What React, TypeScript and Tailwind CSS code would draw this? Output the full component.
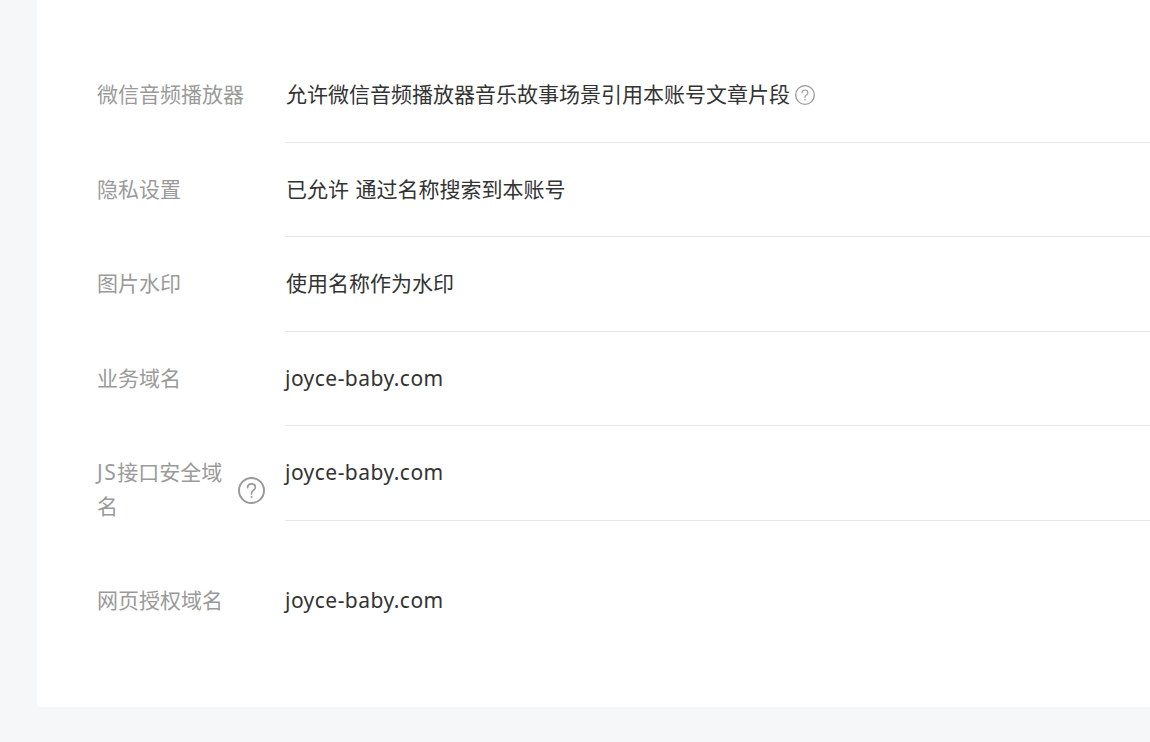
import React from "react";

function Help({ size, stroke }: { size: number; stroke: number }) {
  return (
    <svg width={size} height={size} viewBox="0 0 27 27" fill="none" className="shrink-0">
      <circle cx="13.5" cy="13.5" r={13.5 - stroke / 2} stroke="#9a9a9a" strokeWidth={stroke} />
      <path d="M9.6 10.6c0-2.3 1.7-3.8 3.9-3.8s3.9 1.4 3.9 3.5c0 1.5-.8 2.3-2 3.1-1.2.8-1.9 1.4-1.9 2.9v.7" stroke="#9a9a9a" strokeWidth={stroke * 0.85} strokeLinecap="round" />
      <circle cx="13.5" cy="20" r="1.1" fill="#9a9a9a" />
    </svg>
  );
}

function Row({ label, help, last, children }: { label: React.ReactNode; help?: boolean; last?: boolean; children: React.ReactNode }) {
  return (
    <div className="flex items-start">
      <div className="flex w-[188px] shrink-0 items-center py-[30px] text-[#9a9a9a]">
        <div className={help ? "w-[130px]" : ""}>{label}</div>
        {help && <span className="ml-[11px] mt-[2px]"><Help size={27} stroke={2} /></span>}
      </div>
      <div className={"min-w-0 flex-1 py-[30px] text-[#333333] " + (last ? "" : "border-b border-[#e7e7eb]")}>
        {children}
      </div>
    </div>
  );
}

const Domain = () => <span className="tracking-[0.46px]">joyce-baby.com</span>;

export default function App() {
  return (
    <div className="min-h-[742px] overflow-hidden bg-[#f6f7f9] pb-[35px] pl-[37px] font-['Noto_Sans','Noto_Sans_CJK_SC',sans-serif] text-[21px] leading-[33.6px]">
      <div className="rounded-bl-[4px] bg-white pb-[60px] pl-[60px] pt-[48px]">
        <Row label="微信音频播放器">
          <div className="flex items-center pl-px">
            <span>允许微信音频播放器音乐故事场景引用本账号文章片段</span>
            <span className="ml-[5px]"><Help size={20} stroke={1.8} /></span>
          </div>
        </Row>
        <Row label="隐私设置"><div className="pl-px [word-spacing:1px]">已允许 通过名称搜索到本账号</div></Row>
        <Row label="图片水印"><div className="pl-px">使用名称作为水印</div></Row>
        <Row label="业务域名"><Domain /></Row>
        <Row label={<><div className="whitespace-nowrap"><span className="tracking-[1.5px]">JS</span>接口安全域</div><div>名</div></>} help><Domain /></Row>
        <Row label="网页授权域名" last><Domain /></Row>
      </div>
    </div>
  );
}
